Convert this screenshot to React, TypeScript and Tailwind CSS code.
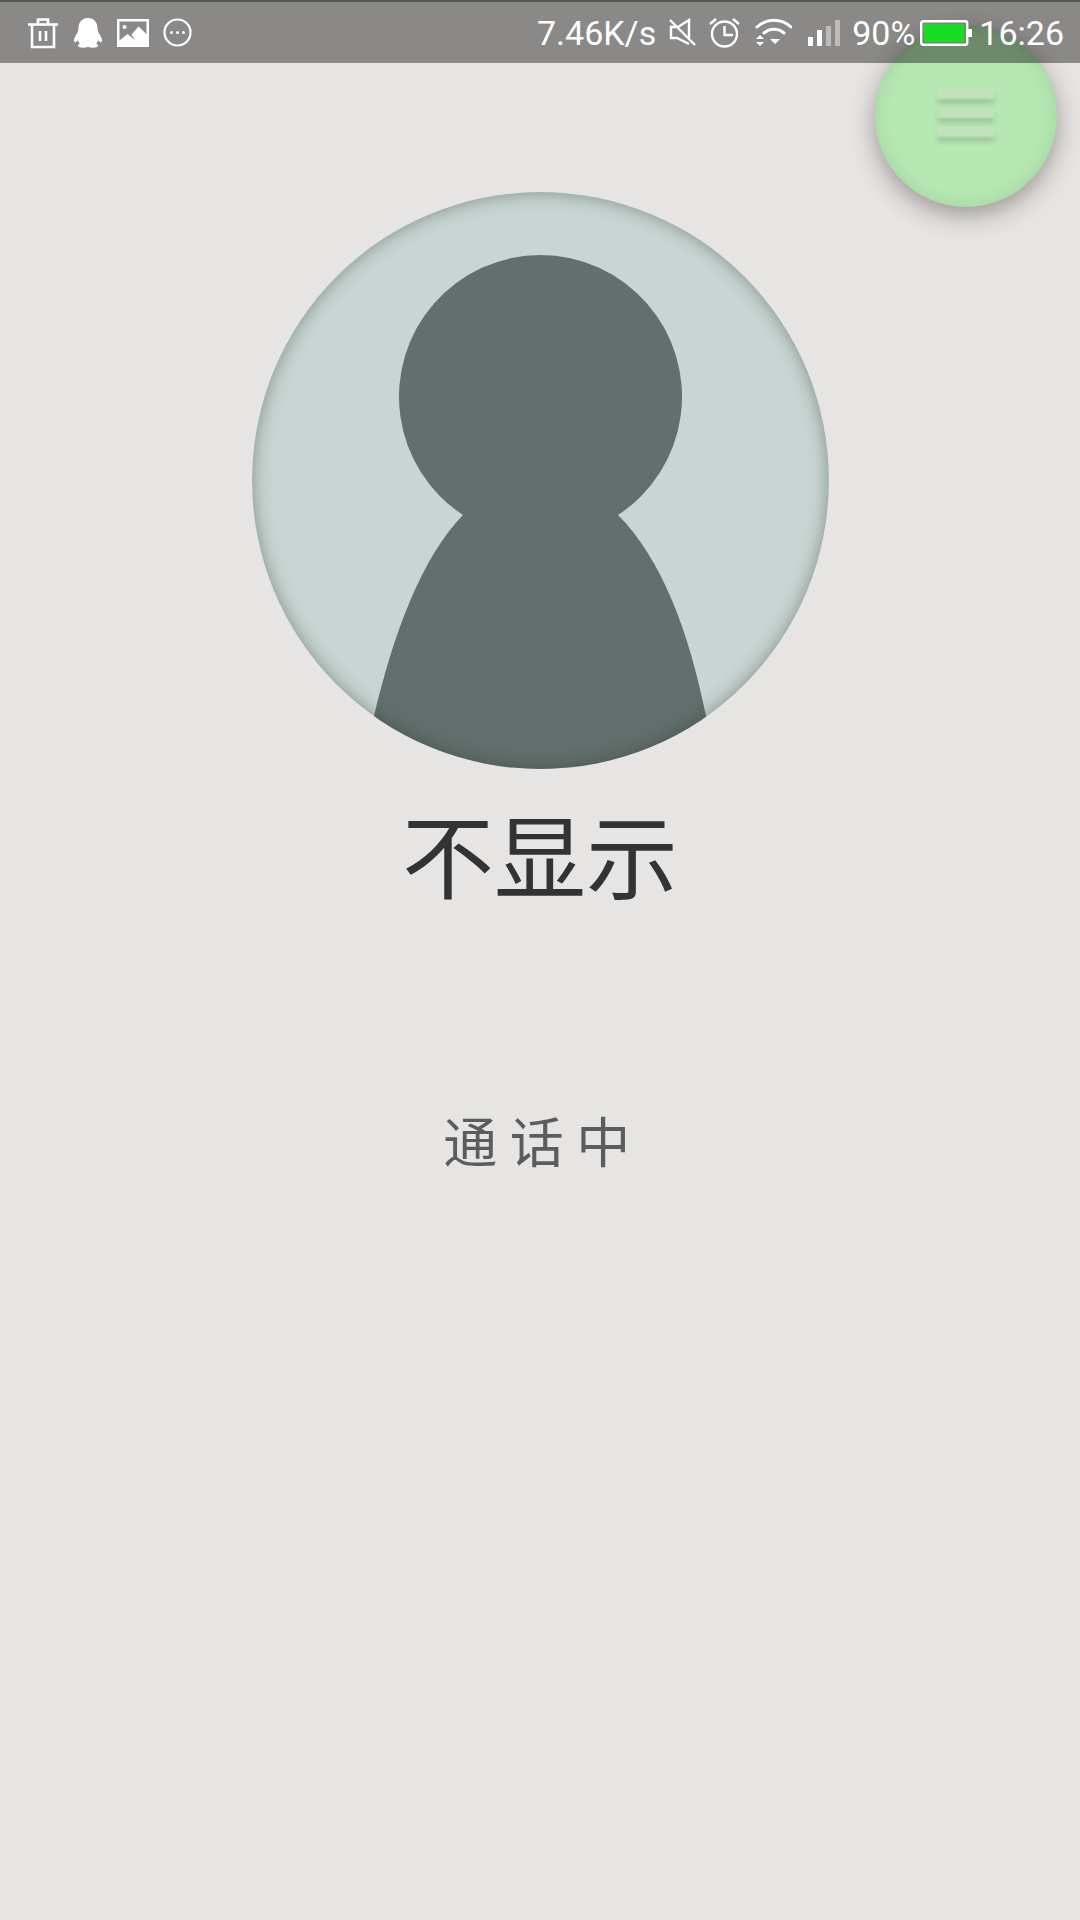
import type { ReactNode } from "react"

function Icon({ w, h, children }: { w: number; h: number; children: ReactNode }) {
  return (
    <svg width={w} height={h} viewBox={`0 0 ${w} ${h}`} className="block shrink-0">
      {children}
    </svg>
  )
}

function TrashIcon() {
  return (
    <Icon w={32} h={32}>
      <g fill="none" stroke="#fff" strokeWidth="2.6">
        <path d="M1 7.5h30" />
        <path d="M11 7V2.5h10V7" />
        <path d="M5 8v22h22V8" />
        <path d="M13 14v10M19 14v10" />
      </g>
    </Icon>
  )
}

function PenguinIcon() {
  return (
    <Icon w={30} h={30}>
      <path
        fill="#fff"
        d="M15 0c-6 0-9.500 4.500-9.500 10 0 1.500-.2 2.800-.8 4C3 17 1 20 1 22.500c0 1.500.8 2.200 2 1.500.7-.4 1.300-1 1.800-1.700.4 1.300 1.100 2.400 2 3.300C5.500 26.500 4.500 27.200 5 28.300c.6 1.300 4 1.700 7 1.200 1-.2 2-.4 3-.4s2 .2 3 .4c3 .5 6.400.1 7-1.200.5-1.100-.5-1.800-1.800-2.700.9-.9 1.600-2 2-3.300.5.7 1.100 1.300 1.800 1.700 1.200.7 2 0 2-1.500 0-2.500-2-5.500-3.700-8.500-.6-1.200-.8-2.500-.8-4C24.500 4.500 21 0 15 0z"
      />
    </Icon>
  )
}

function PictureIcon() {
  return (
    <Icon w={32} h={28}>
      <path
        fill="#fff"
        fillRule="evenodd"
        d="M0 0h32v28H0zM2.500 2.500v19l8-6.500 7.500 6 -3.500-5.500 7-8 8 7.500V2.500z"
      />
      <circle cx="7.500" cy="8" r="2" fill="#fff" />
    </Icon>
  )
}

function MoreIcon() {
  return (
    <Icon w={29} h={29}>
      <circle cx="14.500" cy="14.500" r="13" fill="none" stroke="#fff" strokeWidth="2.200" />
      <circle cx="8.500" cy="14.500" r="1.500" fill="#fff" />
      <circle cx="14.500" cy="14.500" r="1.500" fill="#fff" />
      <circle cx="20.500" cy="14.500" r="1.500" fill="#fff" />
    </Icon>
  )
}

function MuteIcon() {
  return (
    <Icon w={29} h={29}>
      <g fill="none" stroke="#fff" strokeWidth="2.400">
        <path d="M2 2l25 25" />
        <path d="M8 9H3v11h6l12 6" />
        <path d="M10 9l11-7v18" />
      </g>
    </Icon>
  )
}

function AlarmIcon() {
  return (
    <Icon w={31} h={31}>
      <g fill="none" stroke="#fff" strokeWidth="2.400">
        <circle cx="15.500" cy="17" r="12.500" />
        <path d="M15.500 9v9H24" />
        <path d="M1 7l6-5M30 7l-6-5" />
      </g>
    </Icon>
  )
}

function WifiIcon() {
  return (
    <Icon w={37} h={29}>
      <g fill="none" stroke="#fff" strokeWidth="3" strokeLinecap="round">
        <path d="M2 9C12 0 26 0 36 9" />
        <path d="M9 15c6-5 14-5 20 0" />
      </g>
      <path fill="#fff" d="M15 21h10l-5 5zM1 21l4-4 4 4zM1 24h8l-4 4z" />
    </Icon>
  )
}

function SignalIcon() {
  return (
    <Icon w={32} h={26}>
      <rect x="0" y="17" width="5" height="9" fill="#fff" />
      <rect x="9" y="10" width="5" height="16" fill="#fff" />
      <rect x="18" y="6" width="5" height="20" fill="#bdbcba" />
      <rect x="27" y="0" width="5" height="26" fill="#bdbcba" />
    </Icon>
  )
}

function BatteryIcon() {
  return (
    <Icon w={52} h={26}>
      <rect x="1.200" y="1.200" width="46" height="23.600" rx="2" fill="none" stroke="#fff" strokeWidth="2.400" />
      <rect x="4" y="4" width="40.500" height="18" fill="#1bdc24" />
      <rect x="48" y="9" width="4" height="8" fill="#fff" />
    </Icon>
  )
}

function AvatarArt() {
  return (
    <svg viewBox="0 0 577 577" className="block h-full w-full">
      <rect width="577" height="577" fill="#c8d5d2" />
      <path
        fill="#626f6c"
        d="M211 323A141.500 141.500 0 1 1 366 323C410 367 437 440 454 524L470 600H106L122 524C142 440 170 365 211 323Z"
      />
    </svg>
  )
}

export default function App() {
  return (
    <div className="relative min-h-[1920px] w-[1080px] overflow-hidden bg-[#e6e5e3] font-['Noto_Sans_CJK_SC',sans-serif]">
      {/* floating menu button, goes under the translucent status bar */}
      <div className="absolute left-[875px] top-[25px] flex h-[182px] w-[182px] flex-col items-center justify-center gap-[9px] rounded-full bg-[#b7e8b4] pb-[6px] shadow-[0_8px_24px_rgba(70,50,50,0.45),inset_0_0_18px_rgba(120,170,120,0.35)]">
        <div className="h-[10px] w-[56px] bg-[#c2e2bc] shadow-[0_5px_5px_rgba(90,130,90,0.3)] blur-[1px]" />
        <div className="h-[10px] w-[56px] bg-[#c2e2bc] shadow-[0_5px_5px_rgba(90,130,90,0.3)] blur-[1px]" />
        <div className="h-[10px] w-[56px] bg-[#c2e2bc] shadow-[0_5px_5px_rgba(90,130,90,0.3)] blur-[1px]" />
      </div>

      {/* status bar */}
      <div className="relative flex h-[63px] items-center justify-between border-t-2 border-[#555553] bg-black/40 pl-[27px] pr-[16px] font-['Roboto',sans-serif] text-[34px] leading-none text-white">
        <div className="flex items-center gap-[14px]">
          <TrashIcon />
          <PenguinIcon />
          <PictureIcon />
          <MoreIcon />
        </div>
        <div className="flex items-center">
          <span>7.46K/s</span>
          <div className="ml-[12px]">
            <MuteIcon />
          </div>
          <div className="ml-[12px]">
            <AlarmIcon />
          </div>
          <div className="ml-[15px]">
            <WifiIcon />
          </div>
          <div className="ml-[16px]">
            <SignalIcon />
          </div>
          <span className="ml-[12px]">90%</span>
          <div className="ml-[5px]">
            <BatteryIcon />
          </div>
          <span className="ml-[7px]">16:26</span>
        </div>
      </div>

      {/* caller */}
      <div className="flex flex-col items-center">
        <div className="relative mt-[129px] h-[577px] w-[577px] overflow-hidden rounded-full">
          <AvatarArt />
          <div className="absolute inset-0 rounded-full shadow-[inset_0_0_18px_rgba(40,55,52,0.45)]" />
        </div>
        <h1 className="mt-[18px] text-[92px] font-normal leading-[130px] text-[#333333]">不显示</h1>
        <p className="mt-[184px] pl-[6px] text-[54px] font-normal leading-[78px] tracking-[12.5px] text-[#5c5c5c]">通话中</p>
      </div>
    </div>
  )
}
